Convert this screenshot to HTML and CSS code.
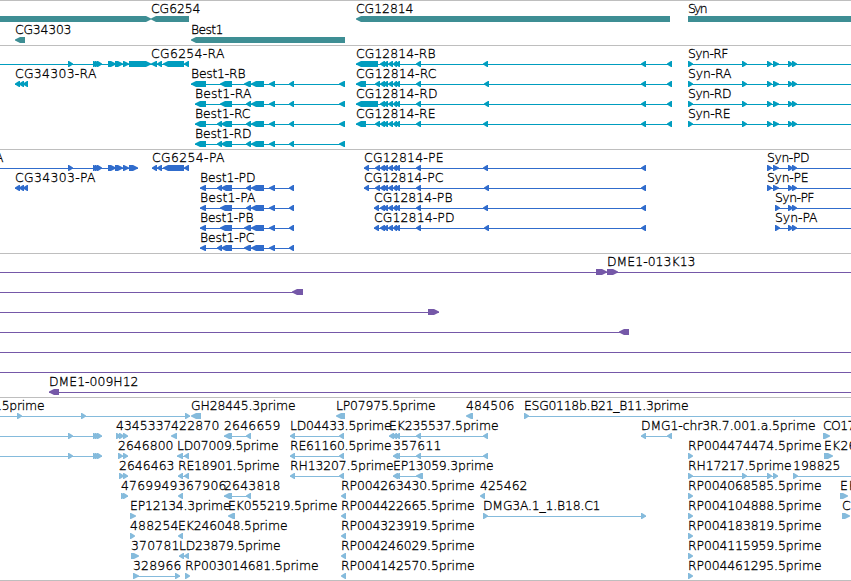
FILE: index.html
```html
<!DOCTYPE html>
<html lang="en">
<head>
  <meta charset="UTF-8">
  <title>Genome browser</title>
  <link rel="stylesheet" href="styles.css">
</head>
<body>

  <div class="browser">
    <svg class="track genes" id="genes"></svg>
    <svg class="track transcripts" id="transcripts"></svg>
    <svg class="track proteins" id="proteins"></svg>
    <svg class="track clones" id="clones"></svg>
    <svg class="track ests" id="ests"></svg>
  </div>

  <script src="tracks.js"></script>
</body>
</html>
```
FILE: styles.css
```css
* {
  margin: 0;
  padding: 0;
  box-sizing: border-box;
}

body {
  background-color: #fff;
  overflow: hidden;
}

.browser {
  display: flex;
  flex-direction: column;
  width: 851px;
  height: 581px;
  border-bottom: 1px solid #bebebe;
}

.track {
  display: block;
  width: 100%;
  border-top: 1px solid #bebebe;
}

.track text {
  font-family: "DejaVu Sans", sans-serif;
  font-size: 12.4px;
  font-weight: 200;
  fill: #000;
  stroke: #000;
  stroke-width: 0.3px;
}

.genes {
  height: 45px;
  fill: #3e8e94;
}

.transcripts {
  height: 104px;
  fill: #009dbf;
}

.proteins {
  height: 104px;
  fill: #306ccc;
}

.clones {
  height: 144px;
  fill: #7558a8;
}

.ests {
  height: 183px;
  fill: #85bbdc;
}
```
FILE: tracks.js
```js
// feature: [row, strand, 'start-end of each block', label, label start, label end]
const genes = [
  [0, '>', '-20-151'],
  [0, '<', '151-189', 'CG6254', 151, 200],
  [0, '<', '356-670', 'CG12814', 356, 413],
  [0, '>', '688-870', 'Syn', 688, 707],
  [1, '<', '15-25', 'CG34303', 15, 71],
  [1, '<', '191-345', 'Best1', 191, 223]
];

const best = '251-264 269-275 289-294';
const cg = '380-385 383-388 388-393 393-397 395-400 416-421';
const syn = '688-693 742-747 767-772 773-779 788-793 792-797 900-905';

const transcripts = [
  [0, '>', '-20--10 68-73 93-98 95-100 97-102 108-116 115-123 123-129 129-151'],
  [0, '<', '151-157 157-162 163-184 184-189', 'CG6254-RA', 151, 224],
  [0, '<', '356-378 ' + cg + ' 483-488 641-646 667-672', 'CG12814-RB', 356, 435],
  [0, '>', syn, 'Syn-RF', 688, 728],
  [1, '<', '15-20 19-24 23-28', 'CG34303-RA', 15, 96],
  [1, '<', '191-206 220-232 244-251 ' + best + ' 339-345', 'Best1-RB', 191, 245],
  [1, '<', '356-366 375-380 ' + cg + ' 484-489 641-646 667-672', 'CG12814-RC', 356, 436],
  [1, '>', syn, 'Syn-RA', 688, 731],
  [2, '<', '195-206 220-232 246-251 ' + best + ' 339-345', 'Best1-RA', 195, 251],
  [2, '<', '356-378 ' + cg + ' 484-489 641-646 667-672', 'CG12814-RD', 356, 437],
  [2, '>', syn, 'Syn-RD', 688, 731],
  [3, '<', '195-206 217-222 221-232 246-251 ' + best + ' 339-345', 'Best1-RC', 195, 250],
  [3, '<', '356-366 375-380 ' + cg + ' 483-488 641-646 667-672', 'CG12814-RE', 356, 435],
  [3, '>', syn, 'Syn-RE', 688, 730],
  [4, '<', '195-206 217-222 221-232 246-251 ' + best + ' 339-345', 'Best1-RD', 195, 251]
];

const proteins = [
  [0, '>', '-20--10 68-73 93-98 95-100 97-102 108-116 115-123 123-129 129-138', 'A', -5, 4],
  [0, '<', '152-157 157-162 163-184 184-189', 'CG6254-PA', 152, 224],
  [0, '<', '364-369 375-380 ' + cg + ' 483-488 641-646', 'CG12814-PE', 364, 443],
  [0, '>', '767-772 773-779 788-793 792-797 900-905', 'Syn-PD', 767, 809],
  [1, '<', '15-20 19-24 23-28', 'CG34303-PA', 15, 95],
  [1, '<', '200-206 217-222 221-232 246-251 ' + best, 'Best1-PD', 200, 255],
  [1, '<', '364-369 375-380 ' + cg + ' 484-489 641-646', 'CG12814-PC', 364, 443],
  [1, '>', '767-772 773-779 788-793 792-797 900-905', 'Syn-PE', 767, 808],
  [2, '<', '200-206 220-232 246-251 ' + best, 'Best1-PA', 200, 255],
  [2, '<', '374-379 ' + cg + ' 483-488 641-646', 'CG12814-PB', 374, 452],
  [2, '>', '775-780 788-793 792-797 900-905', 'Syn-PF', 775, 814],
  [3, '<', '200-206 220-232 244-251 ' + best, 'Best1-PB', 200, 253],
  [3, '<', '374-379 ' + cg + ' 484-489 641-646', 'CG12814-PD', 374, 454],
  [3, '>', '775-780 788-793 792-797 900-905', 'Syn-PA', 775, 817],
  [4, '<', '200-206 217-222 221-232 244-251 ' + best, 'Best1-PC', 200, 254]
];

const clones = [
  [0, '>', '-20--10 596-607'],
  [0, '>', '607-618 900-910', 'DME1-013K13', 607, 695],
  [1, '<', '-20--10 292-303'],
  [2, '>', '-20--10 428-439'],
  [3, '<', '-20--10 619-629'],
  [4, '>', '-20--10 900-910'],
  [5, '>', '-20--10 900-910'],
  [6, '<', '49-59 900-910', 'DME1-009H12', 49, 138]
];

const ests = [
  [0, '>', '-20--10 17-22 81-86 185-190', '.5prime', -2, 44],
  [0, '<', '191-201', 'GH28445.3prime', 191, 295],
  [0, '<', '336-345', 'LP07975.5prime', 336, 435],
  [0, '<', '466-473', '484506', 466, 514],
  [0, '>', '524-529 900-905', 'ESG0118b.B21_B11.3prime', 524, 688],
  [1, '>', '-20--10 68-73 93-98 95-100 97-102'],
  [1, '>', '116-121 119-124 123-128', '4345337', 116, 171],
  [1, '<', '171-177', '422870', 171, 219],
  [1, '<', '224-232 246-251', '2646659', 224, 280],
  [1, '<', '290-295 339-344', 'LD04433.5prime', 290, 391],
  [1, '<', '389-394 392-397 395-400 416-421 483-488', 'EK235537.5prime', 389, 498],
  [1, '<', '641-646 667-672', 'DMG1-chr3R.7.001.a.5prime', 641, 815],
  [1, '>', '823-830', 'CO17', 823, 855],
  [2, '>', '-20--10 68-73 93-98 95-100 97-102'],
  [2, '>', '118-123 123-128', '2646800', 118, 173],
  [2, '<', '177-183 184-189', 'LD07009.5prime', 177, 278],
  [2, '<', '290-295 339-344', 'RE61160.5prime', 290, 391],
  [2, '<', '393-398 395-400 416-421 483-488', '357611', 393, 441],
  [2, '>', '688-693', 'RP004474474.5prime', 688, 821],
  [2, '>', '824-833', 'EK26', 824, 856],
  [3, '>', '119-124 123-128', '2646463', 119, 174],
  [3, '<', '178-183 184-189', 'RE18901.5prime', 178, 279],
  [3, '<', '290-295 339-344', 'RH13207.5prime', 290, 393],
  [3, '<', '393-398 395-400 416-423', 'EP13059.3prime', 393, 493],
  [3, '>', '688-693 742-747 767-772 773-778', 'RH17217.5prime', 688, 791],
  [3, '>', '793-798 900-905', '198825', 793, 840],
  [4, '>', '121-126 123-128', '4769949', 121, 177],
  [4, '<', '178-183', '367906', 178, 226],
  [4, '<', '224-232 246-251', '2643818', 224, 280],
  [4, '<', '341-346', 'RP004263430.5prime', 341, 474],
  [4, '<', '480-485', '425462', 480, 527],
  [4, '>', '688-693', 'RP004068585.5prime', 688, 821],
  [4, '>', '840-848', 'EK', 840, 856],
  [5, '>', '130-136', 'EP12134.3prime', 130, 230],
  [5, '<', '228-235', 'EK055219.5prime', 228, 337],
  [5, '<', '341-346', 'RP004422665.5prime', 341, 474],
  [5, '>', '483-488 641-646', 'DMG3A.1_1.B18.C1', 483, 600],
  [5, '>', '688-693', 'RP004104888.5prime', 688, 821],
  [5, '>', '842-850', 'C', 842, 850],
  [6, '>', '130-135', '488254', 130, 178],
  [6, '<', '178-183', 'EK246048.5prime', 178, 287],
  [6, '<', '341-346', 'RP004323919.5prime', 341, 474],
  [6, '>', '688-693', 'RP004183819.5prime', 688, 821],
  [7, '>', '131-139', '370781', 131, 179],
  [7, '<', '179-184 184-189', 'LD23879.5prime', 179, 280],
  [7, '<', '341-346', 'RP004246029.5prime', 341, 474],
  [7, '>', '688-693', 'RP004115959.5prime', 688, 821],
  [8, '>', '133-139 175-180', '328966', 133, 181],
  [8, '>', '185-190', 'RP003014681.5prime', 185, 318],
  [8, '<', '341-346', 'RP004142570.5prime', 341, 474],
  [8, '>', '688-693', 'RP004461295.5prime', 688, 821]
];

function add(svg, tag, attrs) {
  const el = document.createElementNS('http://www.w3.org/2000/svg', tag);
  for (const name in attrs) {
    el.setAttribute(name, attrs[name]);
  }
  svg.appendChild(el);
  return el;
}

function drawTrack(id, features, rowHeight) {
  const svg = document.getElementById(id);

  features.forEach(([row, strand, blocks, label, from, to]) => {
    const y = 18 + row * rowHeight;
    const parts = blocks.split(' ').map(b => b.match(/^(-?\d+)-(-?\d+)$/).slice(1).map(Number));

    // intron line
    if (parts.length > 1) {
      const start = parts[0][0];
      add(svg, 'rect', { x: start, y: y, width: parts[parts.length - 1][1] - start, height: 1 });
    }

    parts.forEach(([a, b]) => {
      const dir = strand === '>' ? 1 : -1;
      const tip = strand === '>' ? b : a;
      const tail = strand === '>' ? a : b;
      // short blocks keep a full-height edge at the tail
      const neck = tip - dir * Math.min(5, b - a - 1);
      add(svg, 'polygon', {
        points: `${tip},${y - 0.6} ${neck},${y - 3} ${tail},${y - 3} ${tail},${y + 3} ${neck},${y + 3} ${tip},${y + 0.6}`
      });
    });

    if (label) {
      add(svg, 'text', { x: from, y: y - 6, textLength: to - from + 0.5 }).textContent = label;
    }
  });
}

drawTrack('genes', genes, 21);
drawTrack('transcripts', transcripts, 20);
drawTrack('proteins', proteins, 20);
drawTrack('clones', clones, 20);
drawTrack('ests', ests, 20);
```
